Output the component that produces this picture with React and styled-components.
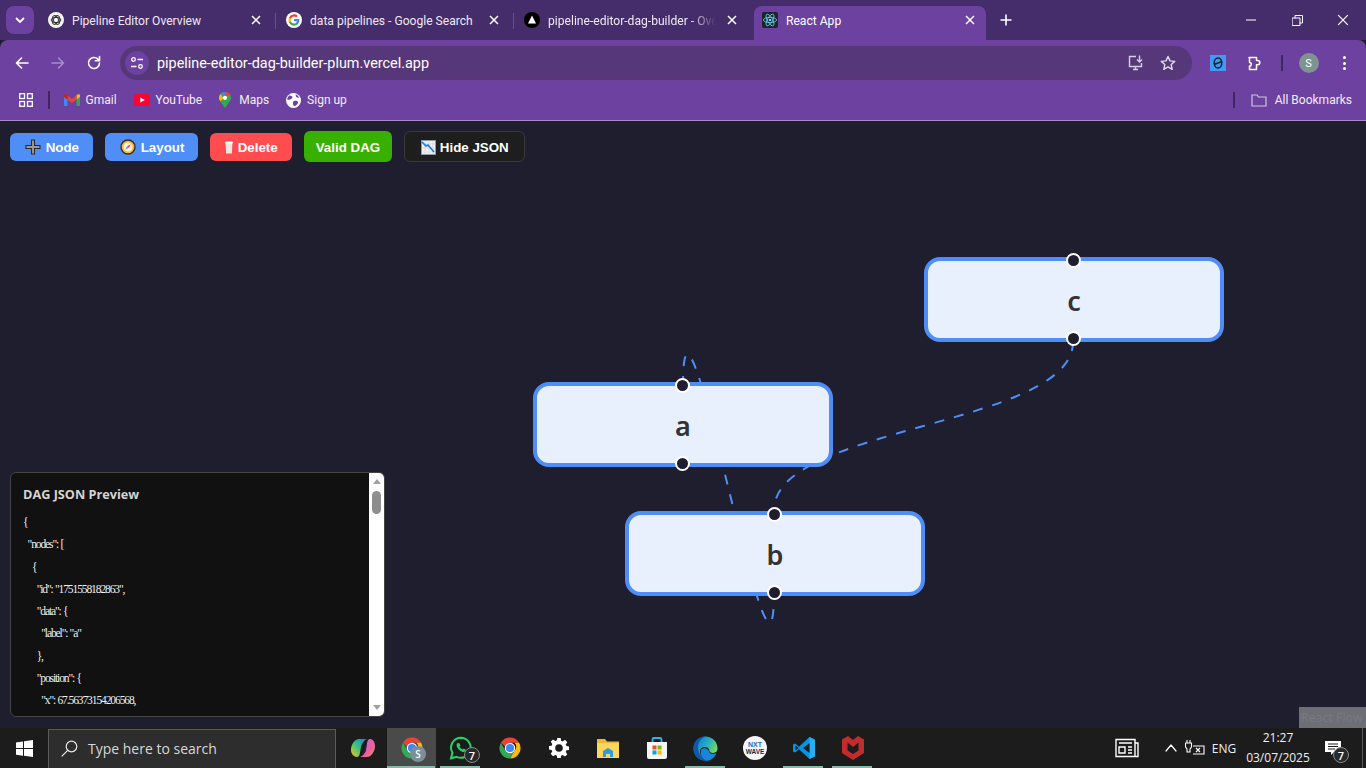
import React from 'react';
import styled, { createGlobalStyle } from 'styled-components';

const GlobalStyle = createGlobalStyle`
  html, body { margin: 0; padding: 0; height: 100%; overflow: hidden; }
  body { font-family: "Open Sans", "Liberation Sans", sans-serif; background: #1e1e2e; }
  * { box-sizing: border-box; }
`;

const nodes = [
  { id: 'a', x: 533, y: 261 },
  { id: 'b', x: 625, y: 390 },
  { id: 'c', x: 924, y: 136 },
];

// only the lines the preview pane shows without scrolling
const jsonPreview = `{
  "nodes": [
    {
      "id": "1751558182863",
      "data": {
        "label": "a"
      },
      "position": {
        "x": 67.56373154206568,`;

/* ---------- icons ---------- */

const ChromeLogo = ({ size = 16 }) => (
  <svg width={size} height={size} viewBox="0 0 48 48">
    <path d="M24 3a21 21 0 0 1 18.2 10.5H24a10.5 10.5 0 0 0-10 7.3L5.8 13.5A21 21 0 0 1 24 3z" fill="#ea4335" />
    <path d="M42.2 13.5A21 21 0 0 1 24 45l9.1-15.8a10.5 10.5 0 0 0 0-15.7z" fill="#fbbc04" />
    <path d="M24 45A21 21 0 0 1 5.8 13.5L15 29.3a10.5 10.5 0 0 0 9 5.2 10 10 0 0 0 9-5.3z" fill="#34a853" />
    <circle cx="24" cy="24" r="10.5" fill="#fff" />
    <circle cx="24" cy="24" r="8.2" fill="#4285f4" />
  </svg>
);

const ChatIcon = () => (
  <svg width="16" height="16" viewBox="0 0 16 16">
    <circle cx="8" cy="8" r="8" fill="#f4f4f4" />
    <g fill="none" stroke="#333" strokeWidth="1">
      <ellipse cx="8" cy="8" rx="4.8" ry="2.6" />
      <ellipse cx="8" cy="8" rx="4.8" ry="2.6" transform="rotate(60 8 8)" />
      <ellipse cx="8" cy="8" rx="4.8" ry="2.6" transform="rotate(120 8 8)" />
    </g>
  </svg>
);

const GoogleG = ({ size = 16 }) => (
  <svg width={size} height={size} viewBox="0 0 48 48">
    <circle cx="24" cy="24" r="24" fill="#fff" />
    <path d="M40 24.6c0-1.2-.1-2.300-.3-3.400H24v6.400h9a7.700 7.700 0 0 1-3.300 5v4.200h5.400c3.100-2.900 4.900-7.100 4.900-12.200z" fill="#4285f4" />
    <path d="M24 41c4.500 0 8.300-1.500 11.100-4.100l-5.400-4.200c-1.500 1-3.400 1.600-5.700 1.600-4.400 0-8-3-9.400-6.900H9v4.300A16.800 16.800 0 0 0 24 41z" fill="#34a853" />
    <path d="M14.600 27.400a10 10 0 0 1 0-6.800v-4.300H9a16.900 16.900 0 0 0 0 15.400z" fill="#fbbc04" />
    <path d="M24 13.700c2.500 0 4.700.9 6.400 2.500l4.800-4.800A16.800 16.800 0 0 0 9 16.300l5.600 4.300c1.400-4 5-6.900 9.400-6.900z" fill="#ea4335" />
  </svg>
);

const VercelIcon = () => (
  <svg width="16" height="16" viewBox="0 0 16 16">
    <circle cx="8" cy="8" r="8" fill="#000" />
    <path d="M8 3.500 12 11.500H4z" fill="#fff" />
  </svg>
);

const ReactIcon = () => (
  <svg width="16" height="16" viewBox="0 0 16 16">
    <rect width="16" height="16" rx="2" fill="#20232a" />
    <g fill="none" stroke="#61dafb" strokeWidth=".8">
      <ellipse cx="8" cy="8" rx="6.600" ry="2.600" />
      <ellipse cx="8" cy="8" rx="6.600" ry="2.600" transform="rotate(60 8 8)" />
      <ellipse cx="8" cy="8" rx="6.600" ry="2.600" transform="rotate(120 8 8)" />
    </g>
    <circle cx="8" cy="8" r="1.300" fill="#61dafb" />
  </svg>
);

const CloseX = ({ size = 10, weight = 1.5 }) => (
  <svg width={size} height={size} viewBox="0 0 10 10">
    <path d="M1 1l8 8M9 1l-8 8" stroke="#fff" strokeWidth={weight} fill="none" />
  </svg>
);

const Chevron = () => (
  <svg width="10" height="6" viewBox="0 0 10 6">
    <path d="M1 1l4 4 4-4" stroke="#fff" strokeWidth="1.800" fill="none" />
  </svg>
);

const PlusGlyph = () => (
  <svg width="12" height="12" viewBox="0 0 12 12">
    <path d="M6 .5v11M.5 6h11" stroke="#fff" strokeWidth="1.600" />
  </svg>
);

const Line = ({ w = 16, h = 16, d, color = '#fff', sw = 1.6, vb }) => (
  <svg width={w} height={h} viewBox={vb || `0 0 ${w} ${h}`}>
    <path d={d} stroke={color} strokeWidth={sw} fill="none" strokeLinecap="round" strokeLinejoin="round" />
  </svg>
);

const SiteSettings = () => (
  <svg width="14" height="14" viewBox="0 0 14 14" fill="none" stroke="#fff" strokeWidth="1.300">
    <circle cx="3.500" cy="3.500" r="1.800" />
    <path d="M7.500 3.500H13M1 10.500h5.500" />
    <circle cx="10.500" cy="10.500" r="1.800" />
  </svg>
);

const InstallIcon = () => (
  <svg width="18" height="18" viewBox="0 0 18 18" fill="none" stroke="#d6cfe0" strokeWidth="1.400">
    <path d="M9 2.500H2.500v10h12V9" />
    <path d="M6 15.500h5M8.500 12.500v3" />
    <path d="M12.500 1.500v6M10 5.500l2.500 2.500L15 5.500" />
  </svg>
);

const StarIcon = () => (
  <svg width="16" height="16" viewBox="0 0 16 16">
    <path d="M8 1.500l2 4.400 4.700.5-3.500 3.200 1 4.700L8 11.900l-4.200 2.400 1-4.700L1.300 6.400 6 5.900z" fill="none" stroke="#e3dcec" strokeWidth="1.400" strokeLinejoin="round" />
  </svg>
);

const ExtensionTile = () => (
  <svg width="16" height="16" viewBox="0 0 16 16">
    <rect width="16" height="16" fill="#3f9bf0" />
    <ellipse cx="8" cy="8" rx="3.800" ry="5" fill="none" stroke="#10203a" strokeWidth="1.500" />
    <path d="M4 9.500L12 6.500" stroke="#10203a" strokeWidth="1.500" />
  </svg>
);

const PuzzleIcon = () => (
  <svg width="18" height="18" viewBox="0 0 18 18">
    <path d="M3 3.500h7.500v3h1.200a1.800 1.800 0 0 1 0 4.200h-1.200v4.800H3.500v-3.400a1.800 1.800 0 0 0 0-3.600V3.500z" fill="none" stroke="#fff" strokeWidth="1.500" strokeLinejoin="round" />
  </svg>
);

const AppsIcon = () => (
  <svg width="14" height="14" viewBox="0 0 14 14" fill="none" stroke="#fff" strokeWidth="1.300">
    <rect x=".700" y=".700" width="4.800" height="4.800" />
    <rect x="8.500" y=".700" width="4.800" height="4.800" />
    <rect x=".700" y="8.500" width="4.800" height="4.800" />
    <rect x="8.500" y="8.500" width="4.800" height="4.800" />
  </svg>
);

const GmailIcon = () => (
  <svg width="16" height="12" viewBox="0 0 16 12">
    <path d="M0 2v9a1 1 0 0 0 1 1h2.500V5z" fill="#4285f4" />
    <path d="M16 2v9a1 1 0 0 1-1 1h-2.500V5z" fill="#34a853" />
    <path d="M12.500 1v4.500L16 3V1.500A1.400 1.400 0 0 0 13.800.400z" fill="#fbbc04" />
    <path d="M3.500 5.500V1.500L8 5l4.500-4v4.500L8 9z" fill="#ea4335" />
    <path d="M0 1.500V3l3.500 2.500v-4L2.200.400A1.400 1.400 0 0 0 0 1.500z" fill="#c5221f" />
  </svg>
);

const YoutubeIcon = () => (
  <svg width="16" height="12" viewBox="0 0 16 12">
    <rect width="16" height="12" rx="3" fill="#ff0033" />
    <path d="M6.300 3.500 10.800 6l-4.500 2.500z" fill="#fff" />
  </svg>
);

const MapsIcon = () => (
  <svg width="12" height="16" viewBox="0 0 12 16">
    <path d="M6 0C2.700 0 0 2.600 0 5.800c0 1.300.5 2.400 1.200 3.400L6 16l4.800-6.800c.7-1 1.200-2.100 1.200-3.400C12 2.600 9.300 0 6 0z" fill="#34a853" />
    <path d="M6 0C4.200 0 2.600.8 1.500 2l3 3.500L6 3.500z" fill="#4285f4" />
    <path d="M6 0v3.500a2.300 2.300 0 0 1 2 1L11 2A6 6 0 0 0 6 0z" fill="#ea4335" />
    <path d="M1.500 2A5.700 5.700 0 0 0 0 5.800c0 1.300.5 2.400 1.200 3.400L4.500 6.400z" fill="#fbbc04" />
    <circle cx="6" cy="5.800" r="2.100" fill="#fff" />
  </svg>
);

const GlobeIcon = () => (
  <svg width="15" height="15" viewBox="0 0 15 15">
    <circle cx="7.500" cy="7.500" r="7.500" fill="#fff" />
    <path d="M3 2.500c1.500 0 3 .5 3.500 1.500S5 6 4 6.500 1.500 7 1 6zM8 8c2-.5 3.500 0 4 1s-1.500 3.500-3 4-2-1.500-2-2.500S7 8.200 8 8zM9.500 1.500c1.500 0 3 1.500 3.500 3-1 .5-2.500 0-3-1z" fill="#6d41a0" />
  </svg>
);

const FolderIcon = () => (
  <svg width="16" height="14" viewBox="0 0 16 14">
    <path d="M1 2h5l1.500 2H15v9H1z" fill="none" stroke="#cfc7da" strokeWidth="1.200" />
  </svg>
);

const PlusEmoji = () => (
  <svg width="16" height="16" viewBox="0 0 16 16">
    <path d="M6.500 1h3v5.500H15v3H9.500V15h-3V9.500H1v-3h5.500z" fill="#9a9a9a" stroke="#2b2b2b" strokeWidth="1.100" />
  </svg>
);

const CompassEmoji = () => (
  <svg width="16" height="16" viewBox="0 0 16 16">
    <circle cx="8" cy="8" r="7" fill="#f6b73c" stroke="#3a2a10" strokeWidth="1.300" />
    <circle cx="8" cy="8" r="4.500" fill="#f7f2e6" />
    <path d="M10.800 5.200 8.800 8.800 7.200 7.200z" fill="#e33" />
    <path d="M5.200 10.800 7.200 7.200 8.800 8.800z" fill="#889" />
  </svg>
);

const TrashEmoji = () => (
  <svg width="8" height="13" viewBox="0 0 8 13">
    <path d="M.6 2h6.800l-.5 10.500H1.100z" fill="#f4e4e4" />
    <rect x="0" y=".5" width="8" height="2" rx="1" fill="#fff" />
  </svg>
);

const ChartEmoji = () => (
  <svg width="15" height="15" viewBox="0 0 15 15">
    <rect x=".500" y=".500" width="14" height="14" fill="#f1f4f6" stroke="#8a96a0" />
    <path d="M4 .500v14M8 .500v14M12 .500v14M.500 4h14M.500 8h14M.500 12h14" stroke="#c9d2d9" strokeWidth=".600" />
    <path d="M1 2l4 4 2-1 6 7" stroke="#1f7ae0" strokeWidth="1.700" fill="none" />
  </svg>
);

const WindowsLogo = () => (
  <svg width="17" height="17" viewBox="0 0 17 17">
    <path d="M0 2.400 7 1.400v6.700H0zM8 1.300 17 0v8.100H8zM0 9h7v6.700L0 14.700zM8 9h9v8l-9-1.300z" fill="#fff" />
  </svg>
);

const SearchGlass = () => (
  <svg width="17" height="17" viewBox="0 0 17 17" fill="none" stroke="#e8e8e8" strokeWidth="1.200">
    <circle cx="10.500" cy="6.500" r="5.300" />
    <path d="M6.700 10.300.7 16.300" />
  </svg>
);

const Copilot = () => (
  <svg width="24" height="24" viewBox="0 0 24 24">
    <defs>
      <linearGradient id="copA" x1="0" y1="1" x2="1" y2="0">
        <stop offset="0" stopColor="#f5c518" />
        <stop offset=".5" stopColor="#33c481" />
        <stop offset="1" stopColor="#1d7fe0" />
      </linearGradient>
      <linearGradient id="copB" x1="0" y1="0" x2="1" y2="1">
        <stop offset="0" stopColor="#c06be8" />
        <stop offset=".6" stopColor="#e860a0" />
        <stop offset="1" stopColor="#f58a3c" />
      </linearGradient>
    </defs>
    <path d="M16 21H9c3-1 5-4 6-8 1-5 1-10 4-10 3 0 5 3 5 7 0 6-4 11-8 11z" fill="url(#copB)" />
    <path d="M8 3h8c-3 1-5 4-6 8-1 5-1 10-4 10-3 0-6-3-6-7 0-6 4-11 8-11z" fill="url(#copA)" />
    <path d="M10.500 19.500c1.500-2 2-5 3-8.500.5-2 1-4.500 2.500-6l-1 9c-.5 2.500-2 4.500-4.500 5.500z" fill="#2a1a3a" />
  </svg>
);

const WhatsappIcon = () => (
  <svg width="24" height="24" viewBox="0 0 24 24">
    <path d="M12 1.800a10 10 0 0 0-8.600 15L2 22.300l5.600-1.400A10 10 0 1 0 12 1.800z" fill="none" stroke="#25d366" strokeWidth="2" />
    <path d="M8.500 7c-1 1-1.200 2.500-.3 4.300 1 2 3 3.800 5 4.500 1.600.5 3 0 3.600-1.200l-.2-1.100-2-1-1 1c-1.300-.5-2.500-1.700-3.100-3l.9-1-1-2.300z" fill="#25d366" />
  </svg>
);

const GearIcon = () => (
  <svg width="20" height="20" viewBox="0 0 20 20">
    <path d="M8.300 0h3.400l.4 2.700 1.700.7L16 1.800l2.300 2.400-1.600 2.200.7 1.700 2.600.400v3.400l-2.600.4-.7 1.700 1.600 2.200-2.300 2.400-2.200-1.600-1.700.7-.4 2.700H8.300l-.4-2.700-1.700-.7L4 18.200l-2.300-2.400 1.600-2.200-.7-1.700L0 11.500V8.100l2.600-.4.7-1.700-1.600-2.200L4 1.400l2.200 1.600 1.700-.7z" fill="#fff" />
    <circle cx="10" cy="10" r="3.800" fill="#1c1c1c" />
  </svg>
);

const FolderApp = () => (
  <svg width="22" height="20" viewBox="0 0 22 20">
    <path d="M0 1h8l2 2.500h12V20H0z" fill="#f2b632" />
    <path d="M0 5h22v15H0z" fill="#fbd75b" />
    <path d="M6 19v-6l5-3 5 3v6h-3v-3H9v3z" fill="#2f9be0" />
  </svg>
);

const StoreIcon = () => (
  <svg width="24" height="24" viewBox="0 0 24 24">
    <path d="M7.500 6V3.500a1.500 1.500 0 0 1 1.500-1.500h6a1.500 1.500 0 0 1 1.500 1.500V6" fill="none" stroke="#2db5f0" strokeWidth="1.800" />
    <path d="M2 6h20v15a2 2 0 0 1-2 2H4a2 2 0 0 1-2-2z" fill="#f5f5f5" />
    <rect x="7.500" y="9.500" width="4" height="4" fill="#f25022" />
    <rect x="12.500" y="9.500" width="4" height="4" fill="#7fba00" />
    <rect x="7.500" y="14.500" width="4" height="4" fill="#00a4ef" />
    <rect x="12.500" y="14.500" width="4" height="4" fill="#ffb900" />
  </svg>
);

const EdgeIcon = () => (
  <svg width="25" height="25" viewBox="0 0 25 25">
    <defs>
      <linearGradient id="edgeA" x1="0" y1="0" x2="1" y2=".6">
        <stop offset="0" stopColor="#0f6dc2" />
        <stop offset=".5" stopColor="#1fa8c8" />
        <stop offset="1" stopColor="#7fe05a" />
      </linearGradient>
    </defs>
    <circle cx="12.500" cy="12.500" r="12" fill="url(#edgeA)" />
    <path d="M.5 12.500C.5 5 6 .5 12.500.5 8 2 5 6 5 11c0 6 4 12 11 13.300-1 .3-2.400.5-3.500.5C5.500 24.800.5 19.500.5 12.500z" fill="#0c5aa8" />
    <path d="M25 13c-1 4-6 5-8 3-1-1-.5-2-1-3-1-2-5-3-7.500-1-1 .8-1.500 2-1.500 3.500 0 4 4 8.500 9 9 5 0 9-6 9-11.500z" fill="#1c1c1c" />
    <path d="M8 14c2-3 7-2 8 1 .5 3 4 4 7.500 2-2 5-6 7.800-10 7.500-4-1-6.500-6-5.500-10.500z" fill="#1686dc" />
  </svg>
);

const NxtLogo = () => (
  <svg width="24" height="24" viewBox="0 0 24 24">
    <circle cx="12" cy="12" r="12" fill="#f4f6fa" />
    <text x="12" y="10.500" textAnchor="middle" fontFamily="Liberation Sans" fontWeight="700" fontSize="7" fill="#2a66c8">NXT</text>
    <text x="12" y="17.500" textAnchor="middle" fontFamily="Liberation Sans" fontWeight="700" fontSize="6.500" fill="#1a2a48">WAVE</text>
  </svg>
);

const VsCodeIcon = () => (
  <svg width="24" height="24" viewBox="0 0 24 24">
    <path d="M17.500 1 23 3.700v16.600L17.500 23 7 13.300l-4 3.100-2-1V8.600l2-1 4 3.100z" fill="#0098e6" />
    <path d="M17.500 1 23 3.700v16.600L17.500 23z" fill="#24b0f5" />
    <path d="M17.500 7 11 12l6.500 5z" fill="#1c1c1c" />
    <path d="M3.500 9.500 6.500 12l-3 2.500z" fill="#1c1c1c" />
  </svg>
);

const McafeeIcon = () => (
  <svg width="22" height="24" viewBox="0 0 22 24">
    <path d="M0 3.500 6 0l5 4 5-4 6 3.500V17l-11 7L0 17z" fill="#c32c2c" />
    <path d="M5.500 6.500 11 11l5.500-4.500v8L11 18l-5.500-3.500z" fill="#1c1c1c" />
  </svg>
);

const NewsIcon = () => (
  <svg width="24" height="20" viewBox="0 0 24 20" fill="none" stroke="#fff" strokeWidth="1.400">
    <path d="M1 1.500h19v17H1zM20 5h3v13.500H20" />
    <path d="M4 5h13M4 9h6v6H4zM13 9h4M13 12h4M13 15h4" />
  </svg>
);

const NetworkIcon = () => (
  <svg width="20" height="16" viewBox="0 0 20 16" fill="none" stroke="#fff" strokeWidth="1.100">
    <path d="M2 0v3M5 0v3M.5 3h6v4l-1.500 2v3H2V9L.5 7z" />
    <path d="M8 6h11v8H8" />
    <path d="M11 8l4 4M15 8l-4 4" />
  </svg>
);

const NotificationIcon = () => (
  <svg width="16" height="14" viewBox="0 0 16 14">
    <path d="M0 0h16v11H9l-3 3v-3H0z" fill="#fff" />
    <path d="M3 3h10M3 5.500h10M3 8h7" stroke="#1c1c1c" strokeWidth="1" />
  </svg>
);

/* ---------- chrome ---------- */

const Page = styled.div`
  width: 1366px;
  height: 768px;
  display: flex;
  flex-direction: column;
  overflow: hidden;
`;

const TabStrip = styled.div`
  height: 40px;
  flex: none;
  background: #452c6a;
  display: flex;
  align-items: flex-end;
  padding-left: 6px;
`;

const TabSearch = styled.div`
  width: 28px;
  height: 28px;
  margin: 0 4px 6px 0;
  flex: none;
  border-radius: 8px;
  background: #6d41a0;
  display: flex;
  align-items: center;
  justify-content: center;
`;

const Tab = styled.div`
  position: relative;
  width: ${(p) => (p.$active ? '232px' : '238px')};
  height: 34px;
  margin-left: ${(p) => (p.$active ? '2px' : '0')};
  padding: 0 ${(p) => (p.$active ? '8px' : '12px')} 6px ${(p) => (p.$active ? '8px' : '10px')};
  flex: none;
  display: flex;
  align-items: center;
  gap: 8px;
  border-radius: 8px 8px 0 0;
  background: ${(p) => (p.$active ? '#6d41a0' : 'transparent')};
  font-family: Roboto, sans-serif;
  font-size: 12.1px;
  color: ${(p) => (p.$active ? '#fff' : '#eee8f5')};

  &::after {
    content: '';
    display: ${(p) => (p.$divider ? 'block' : 'none')};
    position: absolute;
    right: 0;
    top: 7px;
    width: 1.500px;
    height: 16px;
    background: #6b4c96;
  }
`;

const TabTitle = styled.span`
  flex: 1;
  min-width: 0;
  padding-top: 2px;
  white-space: nowrap;
  overflow: hidden;
  ${(p) => p.$fade && 'mask-image: linear-gradient(90deg, #000 85%, transparent);'}
`;

const TabClose = styled.span`
  width: 16px;
  flex: none;
  display: flex;
  justify-content: center;
`;

const NewTab = styled.div`
  width: 40px;
  height: 40px;
  flex: none;
  display: flex;
  align-items: center;
  justify-content: center;
`;

const WindowControls = styled.div`
  margin-left: auto;
  height: 40px;
  display: flex;
`;

const WindowButton = styled.div`
  width: 46px;
  height: 40px;
  display: flex;
  align-items: center;
  justify-content: center;
`;

const Toolbar = styled.div`
  height: 40px;
  flex: none;
  background: #6d41a0;
  border-radius: 8px 8px 0 0;
  padding: 6px 0 0 4px;
  display: flex;
  align-items: center;
`;

const NavButton = styled.div`
  width: 36px;
  height: 34px;
  flex: none;
  display: flex;
  align-items: center;
  justify-content: center;
`;

const AddressBar = styled.div`
  width: 1072px;
  height: 34px;
  margin-left: 8px;
  flex: none;
  border-radius: 17px;
  background: #56387a;
  display: flex;
  align-items: center;
  padding: 0 16px 0 5px;
`;

const SiteChip = styled.div`
  width: 24px;
  height: 24px;
  flex: none;
  border-radius: 50%;
  background: #6d41a0;
  display: flex;
  align-items: center;
  justify-content: center;
`;

const UrlText = styled.span`
  margin-left: 8px;
  flex: 1;
  font-family: Roboto, sans-serif;
  font-size: 14.4px;
  color: #fff;
`;

const AddressIcons = styled.div`
  display: flex;
  align-items: center;
  gap: 15px;
`;

const ToolbarActions = styled.div`
  margin-left: 18px;
  display: flex;
  align-items: center;
`;

const ActionSlot = styled.div`
  width: ${(p) => p.$w}px;
  padding-left: ${(p) => p.$shift || 0}px;
  display: flex;
  align-items: center;
  justify-content: center;
`;

const Separator = styled.div`
  width: 1.500px;
  height: ${(p) => p.$h || 16}px;
  margin-left: ${(p) => p.$gap || 0}px;
  flex: none;
  background: #3f2860;
`;

const Avatar = styled.div`
  width: 20px;
  height: 20px;
  border-radius: 50%;
  background: #7d9491;
  color: #fff;
  font-family: Roboto, sans-serif;
  font-size: 11px;
  display: flex;
  align-items: center;
  justify-content: center;
`;

const Dots = styled.div`
  display: flex;
  flex-direction: column;
  gap: 2.500px;
  & > i {
    width: 3px;
    height: 3px;
    border-radius: 50%;
    background: #fff;
  }
`;

const BookmarkBar = styled.div`
  height: 41px;
  flex: none;
  background: #6d41a0;
  border-bottom: 1px solid #a78cc9;
  display: flex;
  align-items: center;
  padding: 0 14px 0 19px;
  font-family: Roboto, sans-serif;
  font-size: 12px;
  color: #f2edf7;
`;

const Bookmark = styled.div`
  margin-left: ${(p) => p.$gap}px;
  display: flex;
  align-items: center;
  gap: ${(p) => p.$inner || 6}px;
`;

const AllBookmarks = styled.div`
  margin-left: auto;
  display: flex;
  align-items: center;
  gap: 8px;
`;

/* ---------- canvas ---------- */

const Canvas = styled.main`
  position: relative;
  flex: 1;
  min-height: 0;
  background: #1e1e2e;
  overflow: hidden;
`;

const EdgeLayer = styled.svg`
  position: absolute;
  inset: 0;
  width: 100%;
  height: 100%;
`;

const Edge = styled.path`
  fill: none;
  stroke: #4f8ef7;
  stroke-width: 2;
  stroke-dasharray: 10 10;
  stroke-dashoffset: ${(p) => p.$offset}px;
`;

const FlowNode = styled.div`
  position: absolute;
  left: ${(p) => p.$x}px;
  top: ${(p) => p.$y}px;
  width: 300px;
  height: 85px;
  padding-top: 1px;
  border: 4px solid #4f8ef7;
  border-radius: 16px;
  background: #e8f0fe;
  display: flex;
  align-items: center;
  justify-content: center;
  font-family: "Noto Sans", sans-serif;
  font-size: 27px;
  font-weight: 600;
  color: #333;
`;

const Handle = styled.span`
  position: absolute;
  left: 50%;
  ${(p) => (p.$side === 'top' ? 'top: -8px;' : 'bottom: -8px;')}
  width: 15px;
  height: 15px;
  margin-left: -8px;
  border-radius: 50%;
  border: 2px solid #fff;
  background: #1e1e2e;
`;

const ControlBar = styled.div`
  position: absolute;
  top: 10px;
  left: 10px;
  display: flex;
  align-items: center;
  gap: 12px;
`;

const ControlButton = styled.button`
  height: ${(p) => (p.$tall ? '31px' : '28px')};
  padding: 1px ${(p) => p.$pad || 14}px 0;
  border: ${(p) => (p.$outlined ? '1px solid #3a3a3a' : 'none')};
  border-radius: 6px;
  background: ${(p) => p.$bg};
  color: #fff;
  font-family: "Liberation Sans", Arial, sans-serif;
  font-size: 13.33px;
  font-weight: 700;
  display: flex;
  align-items: center;
  gap: 3.700px;
  white-space: nowrap;
`;

const EmojiSlot = styled.span`
  width: ${(p) => p.$w || 18}px;
  flex: none;
  display: flex;
  align-items: center;
  justify-content: center;
`;

const JsonPanel = styled.aside`
  position: absolute;
  left: 10px;
  bottom: 11px;
  width: 375px;
  height: 245px;
  border: 1px solid #444;
  border-radius: 6px;
  background: #111;
  display: flex;
  overflow: hidden;
`;

const JsonBody = styled.div`
  flex: 1;
  min-width: 0;
  padding: 13px 12px 0;
  overflow: hidden;
`;

const JsonTitle = styled.div`
  font-family: "Open Sans", sans-serif;
  font-size: 12.7px;
  font-weight: 700;
  color: #d4d4d4;
  line-height: 17px;
`;

const JsonCode = styled.pre`
  margin: 8px 0 0;
  font-family: "Liberation Serif", serif;
  font-size: 11.5px;
  letter-spacing: -1.1px;
  word-spacing: 0.5px;
  line-height: 22.25px;
  color: #f0f0f0;
`;

const ScrollTrack = styled.div`
  width: 15px;
  flex: none;
  background: #fff;
  display: flex;
  flex-direction: column;
  align-items: center;
  padding-top: 6px;
`;

const ScrollArrow = styled.i`
  width: 0;
  height: 0;
  border-left: 4.500px solid transparent;
  border-right: 4.500px solid transparent;
  ${(p) => (p.$down ? 'border-top: 5px solid #a0a0a0; margin-top: auto; margin-bottom: 6px;' : 'border-bottom: 5px solid #a0a0a0;')}
`;

const ScrollThumb = styled.div`
  width: 9px;
  height: 23px;
  margin-top: 7px;
  border-radius: 5px;
  background: #8e8e8e;
`;

const Attribution = styled.div`
  position: absolute;
  right: 0;
  bottom: 0;
  width: 67px;
  height: 21px;
  padding-left: 2px;
  background: #6e6e76;
  color: #7a7a80;
  font-family: "Open Sans", sans-serif;
  font-size: 12.400px;
  line-height: 21px;
  white-space: nowrap;
`;

/* ---------- taskbar ---------- */

const Taskbar = styled.footer`
  height: 40px;
  flex: none;
  background: #1c1c1c;
  display: flex;
`;

const StartButton = styled.div`
  width: 48px;
  flex: none;
  display: flex;
  align-items: center;
  justify-content: center;
`;

const SearchBox = styled.div`
  width: 288px;
  height: 39px;
  margin-top: 1px;
  flex: none;
  border: 1px solid #5c5c5c;
  border-bottom: none;
  background: #2d2d2d;
  display: flex;
  align-items: center;
  gap: 10px;
  padding: 0 0 2px 12px;
  font-family: "Open Sans", sans-serif;
  font-size: 14px;
  color: #d8d8d8;
`;

const TaskApps = styled.div`
  margin-left: 2px;
  display: flex;
`;

const TaskCell = styled.div`
  position: relative;
  width: 49px;
  height: 40px;
  display: flex;
  align-items: center;
  justify-content: center;
  background: ${(p) => (p.$focused ? '#4a4a4a' : 'transparent')};

  &::after {
    content: '';
    display: ${(p) => (p.$running || p.$focused ? 'block' : 'none')};
    position: absolute;
    bottom: 0;
    left: ${(p) => (p.$focused ? '0' : '4px')};
    right: ${(p) => (p.$focused ? '1px' : '5px')};
    height: 2px;
    background: #86b8ac;
  }
`;

const AppBadge = styled.span`
  position: absolute;
  right: ${(p) => p.$right}px;
  bottom: ${(p) => p.$bottom}px;
  width: 16px;
  height: 16px;
  border-radius: 50%;
  background: ${(p) => p.$bg};
  border: ${(p) => p.$ring || 'none'};
  color: #fff;
  font-family: "Open Sans", sans-serif;
  font-size: ${(p) => p.$size || 10}px;
  font-weight: 600;
  display: flex;
  align-items: center;
  justify-content: center;
`;

const Tray = styled.div`
  margin-left: auto;
  display: flex;
  align-items: center;
  color: #f0f0f0;
  font-family: "Open Sans", sans-serif;
  font-size: 12px;
`;

const TraySlot = styled.div`
  position: relative;
  width: ${(p) => p.$w}px;
  height: 40px;
  display: flex;
  align-items: center;
  justify-content: center;
`;

const Clock = styled.div`
  width: 68px;
  text-align: center;
  line-height: 20px;
  font-size: 12px;
`;

const ShowDesktop = styled.div`
  width: 12px;
  height: 40px;
  padding-left: 8px;
  &::before {
    content: '';
    display: block;
    width: 1px;
    height: 40px;
    background: #5a5a5a;
  }
`;

const App = () => {
  return (
    <>
      <GlobalStyle />
      <Page>
        <TabStrip>
          <TabSearch>
            <Chevron />
          </TabSearch>
          <Tab $divider>
            <ChatIcon />
            <TabTitle>Pipeline Editor Overview</TabTitle>
            <TabClose><CloseX /></TabClose>
          </Tab>
          <Tab $divider>
            <GoogleG />
            <TabTitle>data pipelines - Google Search</TabTitle>
            <TabClose><CloseX /></TabClose>
          </Tab>
          <Tab>
            <VercelIcon />
            <TabTitle $fade>pipeline-editor-dag-builder - Overview</TabTitle>
            <TabClose><CloseX /></TabClose>
          </Tab>
          <Tab $active>
            <ReactIcon />
            <TabTitle>React App</TabTitle>
            <TabClose><CloseX /></TabClose>
          </Tab>
          <NewTab>
            <PlusGlyph />
          </NewTab>
          <WindowControls>
            <WindowButton>
              <Line w={10} h={10} d="M0 5h10" sw={1} />
            </WindowButton>
            <WindowButton>
              <Line w={11} h={11} d="M.5 3h7.500v7.500H.5zM3 3V.5h7.500V8H8" sw={1} />
            </WindowButton>
            <WindowButton>
              <CloseX size={12} weight={1} />
            </WindowButton>
          </WindowControls>
        </TabStrip>

        <Toolbar>
          <NavButton>
            <Line d="M14 8H2.500M7.500 3 2.500 8l5 5" />
          </NavButton>
          <NavButton>
            <Line d="M2 8h11.500M8.500 3l5 5-5 5" color="#a78cc9" />
          </NavButton>
          <NavButton>
            <Line d="M13.500 8a5.500 5.500 0 1 1-1.600-3.900L13.500 5.700M13.500 1.500v4.200H9.300" />
          </NavButton>
          <AddressBar>
            <SiteChip>
              <SiteSettings />
            </SiteChip>
            <UrlText>pipeline-editor-dag-builder-plum.vercel.app</UrlText>
            <AddressIcons>
              <InstallIcon />
              <StarIcon />
            </AddressIcons>
          </AddressBar>
          <ToolbarActions>
            <ExtensionTile />
            <ActionSlot $w={55} $shift={3}><PuzzleIcon /></ActionSlot>
            <Separator $h={16} />
            <ActionSlot $w={52}><Avatar>S</Avatar></ActionSlot>
            <ActionSlot $w={20}><Dots><i /><i /><i /></Dots></ActionSlot>
          </ToolbarActions>
        </Toolbar>

        <BookmarkBar>
          <AppsIcon />
          <Separator $h={18} $gap={15} />
          <Bookmark $gap={14}><GmailIcon />Gmail</Bookmark>
          <Bookmark $gap={17}><YoutubeIcon />YouTube</Bookmark>
          <Bookmark $gap={17} $inner={8}><MapsIcon />Maps</Bookmark>
          <Bookmark $gap={17} $inner={6}><GlobeIcon />Sign up</Bookmark>
          <AllBookmarks>
            <Separator $h={16} />
            <Bookmark $gap={8} $inner={8}><FolderIcon />All Bookmarks</Bookmark>
          </AllBookmarks>
        </BookmarkBar>

        <Canvas>
          <EdgeLayer viewBox="0 0 1366 607">
            <Edge $offset={3} d="M774 471 C774 631 683 104 683 264" />
            <Edge $offset={1} d="M1073 221 C1073 305 774 305 774 389" />
          </EdgeLayer>

          {nodes.map((node) => (
            <FlowNode key={node.id} $x={node.x} $y={node.y}>
              <Handle $side="top" />
              {node.id}
              <Handle $side="bottom" />
            </FlowNode>
          ))}

          <ControlBar>
            <ControlButton $bg="#4f8ef7"><EmojiSlot><PlusEmoji /></EmojiSlot>Node</ControlButton>
            <ControlButton $bg="#4f8ef7"><EmojiSlot><CompassEmoji /></EmojiSlot>Layout</ControlButton>
            <ControlButton $bg="#ff4d4f"><EmojiSlot $w={9.6}><TrashEmoji /></EmojiSlot>Delete</ControlButton>
            <ControlButton $bg="#38b000" $tall $pad={12}>Valid DAG</ControlButton>
            <ControlButton $bg="#1e1e1e" $tall $outlined $pad={15}><EmojiSlot $w={16}><ChartEmoji /></EmojiSlot>Hide JSON</ControlButton>
          </ControlBar>

          <JsonPanel>
            <JsonBody>
              <JsonTitle>DAG JSON Preview</JsonTitle>
              <JsonCode>{jsonPreview}</JsonCode>
            </JsonBody>
            <ScrollTrack>
              <ScrollArrow />
              <ScrollThumb />
              <ScrollArrow $down />
            </ScrollTrack>
          </JsonPanel>

          <Attribution>React Flow</Attribution>
        </Canvas>

        <Taskbar>
          <StartButton><WindowsLogo /></StartButton>
          <SearchBox>
            <SearchGlass />
            Type here to search
          </SearchBox>
          <TaskApps>
            <TaskCell><Copilot /></TaskCell>
            <TaskCell $focused>
              <ChromeLogo size={24} />
              <AppBadge $right={10} $bottom={6} $bg="#7b8f99">S</AppBadge>
            </TaskCell>
            <TaskCell $running>
              <WhatsappIcon />
              <AppBadge $right={5} $bottom={5} $bg="#2a2a2a" $ring="1px solid #8a8a8a" $size={11}>7</AppBadge>
            </TaskCell>
            <TaskCell><ChromeLogo size={24} /></TaskCell>
            <TaskCell><GearIcon /></TaskCell>
            <TaskCell><FolderApp /></TaskCell>
            <TaskCell><StoreIcon /></TaskCell>
            <TaskCell $running><EdgeIcon /></TaskCell>
            <TaskCell><NxtLogo /></TaskCell>
            <TaskCell $running><VsCodeIcon /></TaskCell>
            <TaskCell $running><McafeeIcon /></TaskCell>
          </TaskApps>
          <Tray>
            <TraySlot $w={48}><NewsIcon /></TraySlot>
            <TraySlot $w={8} />
            <TraySlot $w={24}><Line w={12} h={8} d="M1 7l5-6 5 6" sw={1.2} /></TraySlot>
            <TraySlot $w={24}><NetworkIcon /></TraySlot>
            <TraySlot $w={34}>ENG</TraySlot>
            <TraySlot $w={3} />
            <Clock>
              21:27
              <br />
              03/07/2025
            </Clock>
            <TraySlot $w={42}>
              <NotificationIcon />
              <AppBadge $right={5} $bottom={5} $bg="#2a2a2a" $ring="1px solid #8a8a8a" $size={11}>7</AppBadge>
            </TraySlot>
            <ShowDesktop />
          </Tray>
        </Taskbar>
      </Page>
    </>
  );
};

export default App;
